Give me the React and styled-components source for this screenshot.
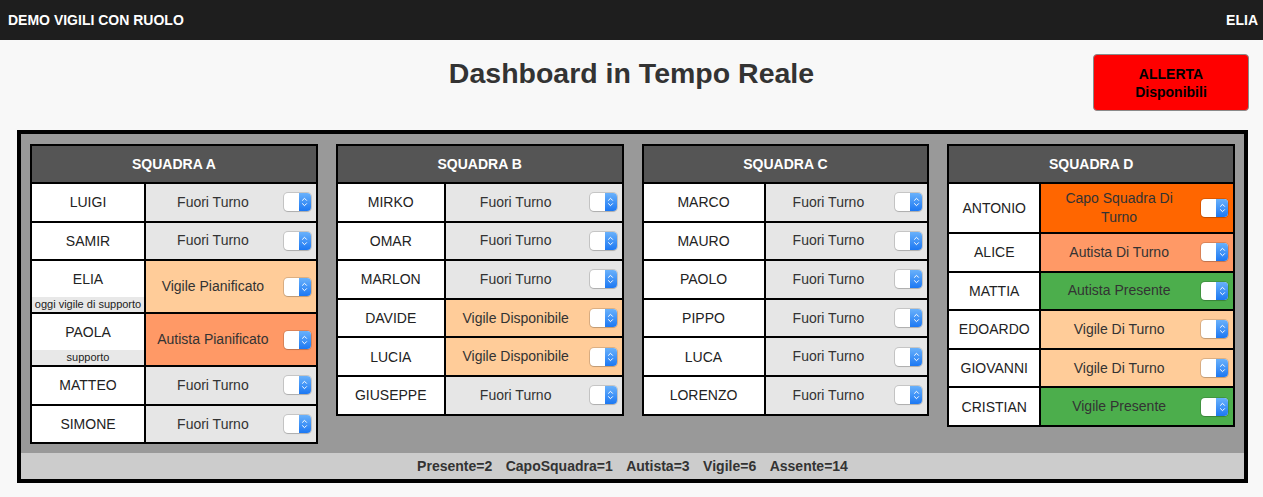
import React from 'react'
import styled, { createGlobalStyle } from 'styled-components'

const GlobalStyle = createGlobalStyle`
	html, body {
		margin: 0;
		padding: 0;
		background: #f8f8f8;
		font-family: "Liberation Sans", Arial, Helvetica, sans-serif;
	}
`

const statusColors = {
	'Fuori Turno': '#e6e6e6',
	'Vigile Pianificato': '#ffcc99',
	'Vigile Disponibile': '#ffcc99',
	'Vigile Di Turno': '#ffcc99',
	'Autista Pianificato': '#ff9966',
	'Autista Di Turno': '#ff9966',
	'Capo Squadra Di Turno': '#ff6600',
	'Autista Presente': '#4cae4c',
	'Vigile Presente': '#4cae4c',
}

const squadre = [
	{
		name: 'SQUADRA A',
		nameWidth: 112,
		members: [
			{ name: 'LUIGI', status: 'Fuori Turno' },
			{ name: 'SAMIR', status: 'Fuori Turno' },
			{ name: 'ELIA', note: 'oggi vigile di supporto', status: 'Vigile Pianificato' },
			{ name: 'PAOLA', note: 'supporto', status: 'Autista Pianificato' },
			{ name: 'MATTEO', status: 'Fuori Turno' },
			{ name: 'SIMONE', status: 'Fuori Turno' },
		],
	},
	{
		name: 'SQUADRA B',
		nameWidth: 106,
		members: [
			{ name: 'MIRKO', status: 'Fuori Turno' },
			{ name: 'OMAR', status: 'Fuori Turno' },
			{ name: 'MARLON', status: 'Fuori Turno' },
			{ name: 'DAVIDE', status: 'Vigile Disponibile' },
			{ name: 'LUCIA', status: 'Vigile Disponibile' },
			{ name: 'GIUSEPPE', status: 'Fuori Turno' },
		],
	},
	{
		name: 'SQUADRA C',
		nameWidth: 120,
		members: [
			{ name: 'MARCO', status: 'Fuori Turno' },
			{ name: 'MAURO', status: 'Fuori Turno' },
			{ name: 'PAOLO', status: 'Fuori Turno' },
			{ name: 'PIPPO', status: 'Fuori Turno' },
			{ name: 'LUCA', status: 'Fuori Turno' },
			{ name: 'LORENZO', status: 'Fuori Turno' },
		],
	},
	{
		name: 'SQUADRA D',
		nameWidth: 90,
		members: [
			{ name: 'ANTONIO', status: 'Capo Squadra Di Turno' },
			{ name: 'ALICE', status: 'Autista Di Turno' },
			{ name: 'MATTIA', status: 'Autista Presente' },
			{ name: 'EDOARDO', status: 'Vigile Di Turno' },
			{ name: 'GIOVANNI', status: 'Vigile Di Turno' },
			{ name: 'CRISTIAN', status: 'Vigile Presente' },
		],
	},
]

const totals = ['Presente=2', 'CapoSquadra=1', 'Autista=3', 'Vigile=6', 'Assente=14']

const TopBar = styled.div`
	align-items: center;
	background: #1e1e1e;
	color: #fff;
	display: flex;
	font-size: 14px;
	font-weight: 700;
	height: 40px;
	justify-content: space-between;
	padding: 0 5px 0 8px;
`

const Heading = styled.div`
	align-items: start;
	display: grid;
	grid-template-columns: 1fr auto 1fr;
	padding: 14px 14px 19px;
`

const Title = styled.h1`
	color: #333;
	font-size: 28.5px;
	font-weight: 700;
	grid-column: 2;
	line-height: 38px;
	margin: 0;
`

const AlertButton = styled.button`
	background: #ff0000;
	border: 1px solid #8a8a8a;
	border-radius: 4px;
	color: #000;
	font-family: inherit;
	font-size: 14px;
	font-weight: 700;
	grid-column: 3;
	height: 57px;
	justify-self: end;
	line-height: 18px;
	padding: 0;
	width: 156px;
`

const Board = styled.div`
	background: #999;
	border: 4px solid #000;
	margin: 0 15px 0 17px;
`

const Teams = styled.div`
	align-items: start;
	display: grid;
	grid-template-columns: repeat(4, 1fr);
	padding: 10px 0 9px;
`

const TeamSlot = styled.div`
	padding: 0 9px;
`

const Table = styled.div`
	background: #000;
	display: grid;
	gap: 2px;
	grid-template-columns: ${p => p.$nameWidth}px 1fr;
	padding: 2px;
`

const TeamHeader = styled.div`
	align-items: center;
	background: #555;
	color: #fff;
	display: flex;
	font-size: 14px;
	font-weight: 700;
	grid-column: 1 / -1;
	height: 36px;
	justify-content: center;
`

const NameCell = styled.div`
	background: #fff;
	color: #222;
	display: flex;
	flex-direction: column;
	font-size: 14px;
	min-height: 36.6px;
`

const NameMain = styled.div`
	align-items: center;
	display: flex;
	flex: 1;
	justify-content: center;
	min-height: 36px;
`

const NameNote = styled.div`
	background: #e8e8e8;
	font-size: 11px;
	line-height: 15px;
	text-align: center;
	white-space: nowrap;
`

const StatusCell = styled.div`
	align-items: center;
	background: ${p => p.$bg};
	box-sizing: border-box;
	color: #333;
	display: flex;
	font-size: 14px;
	line-height: 19px;
	min-height: 36.6px;
	padding: 5px 0;
`

const StatusText = styled.div`
	flex: 1;
	padding: 0 8px;
	text-align: center;
`

const Picker = styled.span`
	background: #fff;
	border-radius: 4px;
	box-shadow: 0 0 0 1px rgba(0, 0, 0, 0.14), 0 1px 1px rgba(0, 0, 0, 0.12);
	display: flex;
	flex: none;
	height: 18px;
	justify-content: flex-end;
	margin: 0 5px 0 4px;
	overflow: hidden;
	width: 27px;
`

const PickerArrow = styled.span`
	align-items: center;
	background: linear-gradient(#69b1fb, #1c78f3);
	display: flex;
	justify-content: center;
	width: 12px;
`

const Footer = styled.div`
	align-items: center;
	background: #ccc;
	color: #333;
	display: flex;
	font-size: 14px;
	font-weight: 700;
	gap: 13.5px;
	height: 26px;
	justify-content: center;
`

const Select = () => (
	<Picker>
		<PickerArrow>
			<svg width="7" height="12" viewBox="0 0 7 12" fill="none" stroke="#fff" strokeWidth="1">
				<path d="M1.2 4.6 L3.5 2.3 L5.8 4.6" />
				<path d="M1.2 7.4 L3.5 9.7 L5.8 7.4" />
			</svg>
		</PickerArrow>
	</Picker>
)

const Squadra = ({ squadra }) => (
	<TeamSlot>
		<Table $nameWidth={squadra.nameWidth}>
			<TeamHeader>{squadra.name}</TeamHeader>
			{squadra.members.map(m => (
				<React.Fragment key={m.name}>
					<NameCell>
						<NameMain>{m.name}</NameMain>
						{m.note && <NameNote>{m.note}</NameNote>}
					</NameCell>
					<StatusCell $bg={statusColors[m.status]}>
						<StatusText>{m.status}</StatusText>
						<Select />
					</StatusCell>
				</React.Fragment>
			))}
		</Table>
	</TeamSlot>
)

const App = () => {
	return (
		<>
			<GlobalStyle />
			<TopBar>
				<span>DEMO VIGILI CON RUOLO</span>
				<span>ELIA</span>
			</TopBar>
			<Heading>
				<Title>Dashboard in Tempo Reale</Title>
				<AlertButton>ALLERTA<br />Disponibili</AlertButton>
			</Heading>
			<Board>
				<Teams>
					{squadre.map(s => <Squadra key={s.name} squadra={s} />)}
				</Teams>
				<Footer>
					{totals.map(t => <span key={t}>{t}</span>)}
				</Footer>
			</Board>
		</>
	)
}

export default App
